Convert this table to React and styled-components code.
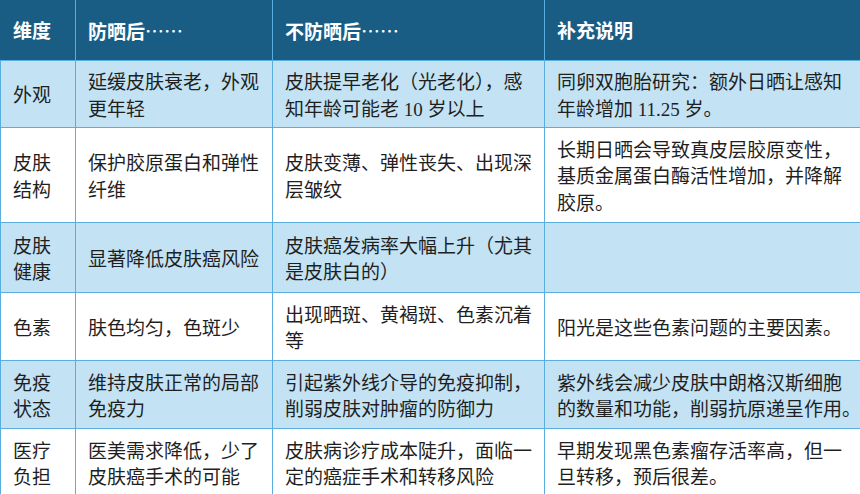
import React from "react";
import styled, { createGlobalStyle } from "styled-components";

const Global = createGlobalStyle`
  html, body { margin: 0; padding: 0; background: #ffffff; overflow: hidden; }
  body { width: 860px; height: 494px; }
`;

const Table = styled.table`
  border-collapse: collapse;
  table-layout: fixed;
  width: 863px;
  font-family: "Liberation Serif", "Noto Sans CJK SC", serif;
  font-size: 19px;
  line-height: 26.5px;
  color: #1f1f1f;
`;

const HeadRow = styled.tr`
  height: 60px;
  background: #1a5d84;
`;

const HeadCell = styled.th`
  border: 1px solid #5aaedf;
  border-top: none;
  padding: 5px 12px 0;
  text-align: left;
  font-weight: bold;
  color: #ffffff;
  vertical-align: middle;
  &:first-child { border-left-color: #1a5d84; }
`;

const Dots = styled.span`
  font-family: "Noto Sans CJK SC", sans-serif;
  font-weight: normal;
`;

const Row = styled.tr`
  height: ${(p) => p.$h}px;
  background: ${(p) => (p.$blue ? "#c3e3f4" : "#ffffff")};
`;

const Cell = styled.td`
  border: 1px solid #5aaedf;
  padding: 8px 12px 2px;
  vertical-align: middle;
  word-break: break-all;
`;

/* trailing full stop hangs into the cell padding, as in the source document */
const Hang = styled.span`
  display: inline-block;
  width: 0;
  white-space: nowrap;
  overflow: visible;
`;

const cols = [75, 197, 272, 319];
const heads = [
  ["维度", ""],
  ["防晒后", "……"],
  ["不防晒后", "……"],
  ["补充说明", ""],
];

const rows = [
  {
    h: 67,
    c: [
      "外观",
      "延缓皮肤衰老，外观更年轻",
      "皮肤提早老化（光老化），感知年龄可能老 10 岁以上",
      "同卵双胞胎研究：额外日晒让感知年龄增加 11.25 岁。",
    ],
  },
  {
    h: 95,
    c: [
      "皮肤结构",
      "保护胶原蛋白和弹性纤维",
      "皮肤变薄、弹性丧失、出现深层皱纹",
      "长期日晒会导致真皮层胶原变性，基质金属蛋白酶活性增加，并降解胶原。",
    ],
  },
  {
    h: 70,
    c: [
      "皮肤健康",
      "显著降低皮肤癌风险",
      "皮肤癌发病率大幅上升（尤其是皮肤白的）",
      "",
    ],
  },
  {
    h: 68,
    c: [
      "色素",
      "肤色均匀，色斑少",
      "出现晒斑、黄褐斑、色素沉着等",
      "阳光是这些色素问题的主要因素。",
    ],
  },
  {
    h: 68,
    c: [
      "免疫状态",
      "维持皮肤正常的局部免疫力",
      "引起紫外线介导的免疫抑制，削弱皮肤对肿瘤的防御力",
      "紫外线会减少皮肤中朗格汉斯细胞的数量和功能，削弱抗原递呈作用。",
    ],
  },
  {
    h: 68,
    c: [
      "医疗负担",
      "医美需求降低，少了皮肤癌手术的可能",
      "皮肤病诊疗成本陡升，面临一定的癌症手术和转移风险",
      "早期发现黑色素瘤存活率高，但一旦转移，预后很差。",
    ],
  },
];

function CellText({ text }) {
  if (text.endsWith("。")) {
    return (
      <>
        {text.slice(0, -1)}
        <Hang>。</Hang>
      </>
    );
  }
  return text;
}

export default function App() {
  return (
    <>
      <Global />
      <Table>
        <colgroup>
          {cols.map((w, i) => (
            <col key={i} style={{ width: w }} />
          ))}
        </colgroup>
        <thead>
          <HeadRow>
            {heads.map(([t, d]) => (
              <HeadCell key={t}>
                {t}
                {d && <Dots>{d}</Dots>}
              </HeadCell>
            ))}
          </HeadRow>
        </thead>
        <tbody>
          {rows.map((r, i) => (
            <Row key={i} $h={r.h} $blue={i % 2 === 0}>
              {r.c.map((t, j) => (
                <Cell key={j}>
                  <CellText text={t} />
                </Cell>
              ))}
            </Row>
          ))}
        </tbody>
      </Table>
    </>
  );
}
